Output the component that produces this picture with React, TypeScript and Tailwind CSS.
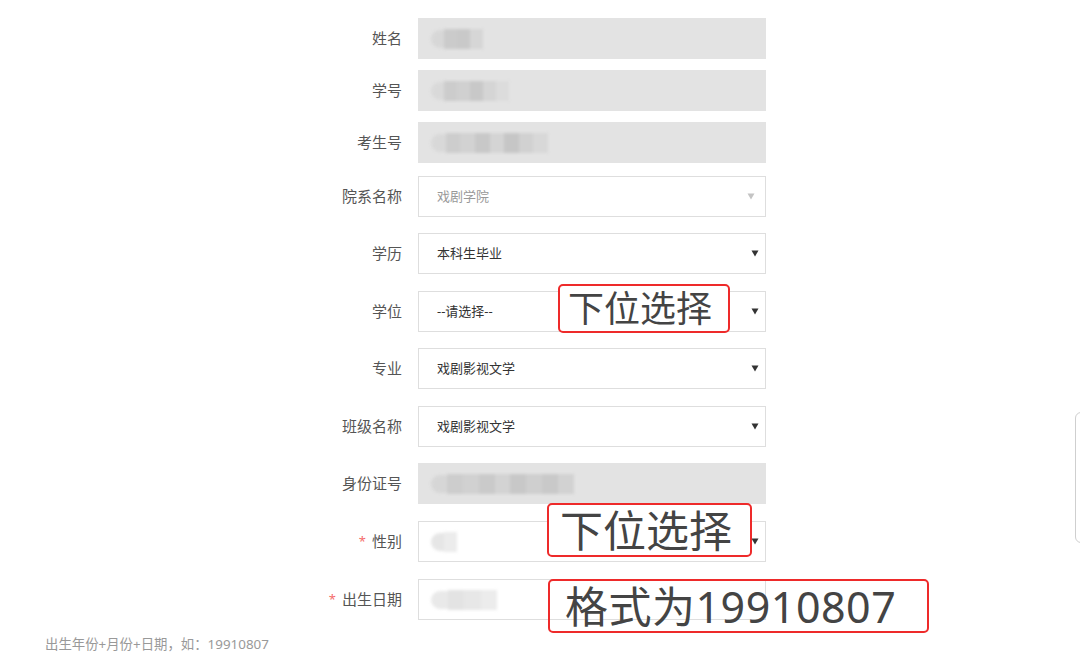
import React from "react";

const FONT = { fontFamily: '"Noto Sans", "Noto Sans CJK SC", sans-serif' };

function Blob({ w, shades }: { w: number; shades: string[] }) {
  return (
    <div className="flex items-center blur-[1.5px]" style={{ width: w }}>
      {shades.map((c, i) => (
        <div
          key={i}
          className={i === 0 ? "h-[18px] flex-1 rounded-l-full" : "h-[20px] flex-1"}
          style={{ backgroundColor: c }}
        />
      ))}
    </div>
  );
}

function Arrow({ gray }: { gray?: boolean }) {
  return (
    <svg width="8" height="7" viewBox="0 0 8 7" className="shrink-0">
      <path d="M0.5 0.5 L7.5 0.5 L4 6.5 Z" fill={gray ? "#c4c4c4" : "#333"} />
    </svg>
  );
}

type Row = {
  label: string;
  star?: boolean;
  mt: string;
  kind: "ro" | "sel" | "dis" | "inp";
  text?: string;
  blob?: { w: number; shades: string[] };
};

const rows: Row[] = [
  { label: "姓名", mt: "mt-[18px]", kind: "ro", blob: { w: 52, shades: ["#d7d7d7", "#cbcbcb", "#c9c9c9", "#d6d6d6"] } },
  { label: "学号", mt: "mt-[11px]", kind: "ro", blob: { w: 78, shades: ["#d9d9d9", "#cccccc", "#d0d0d0", "#c8c8c8", "#d5d5d5", "#dcdcdc"] } },
  { label: "考生号", mt: "mt-[11px]", kind: "ro", blob: { w: 117, shades: ["#d8d8d8", "#cdcdcd", "#d2d2d2", "#c8c8c8", "#d4d4d4", "#c6c6c6", "#d1d1d1", "#d8d8d8"] } },
  { label: "院系名称", mt: "mt-[13px]", kind: "dis", text: "戏剧学院" },
  { label: "学历", mt: "mt-[16px]", kind: "sel", text: "本科生毕业" },
  { label: "学位", mt: "mt-[17px]", kind: "sel", text: "--请选择--" },
  { label: "专业", mt: "mt-[16px]", kind: "sel", text: "戏剧影视文学" },
  { label: "班级名称", mt: "mt-[17px]", kind: "sel", text: "戏剧影视文学" },
  { label: "身份证号", mt: "mt-[16px]", kind: "ro", blob: { w: 143, shades: ["#d6d6d6", "#cdcdcd", "#d1d1d1", "#cacaca", "#d3d3d3", "#c8c8c8", "#cfcfcf", "#c9c9c9", "#d2d2d2"] } },
  { label: "性别", star: true, mt: "mt-[17px]", kind: "inp", blob: { w: 26, shades: ["#e6e6e6", "#ececec"] } },
  { label: "出生日期", star: true, mt: "mt-[17px]", kind: "inp", blob: { w: 66, shades: ["#e9e9e9", "#e3e3e3", "#e7e7e7", "#ececec"] } },
];

function Field({ r }: { r: Row }) {
  let box = "";
  if (r.kind === "ro") box = "bg-[#e3e3e3] border border-[#e3e3e3]";
  else box = "bg-white border border-[#dedede]";
  return (
    <div className={`flex items-center ${r.mt}`}>
      <div className="w-[402px] text-right text-[15px] text-[#555] leading-none">
        {r.star && <span className="text-[#f56c6c] text-[13px] mr-[6px] relative top-[-1px]">*</span>}
        {r.label}
      </div>
      <div className={`ml-4 w-[348px] h-[41px] flex items-center pl-[12px] pr-[6px] ${box}`}>
        {r.blob && <Blob w={r.blob.w} shades={r.blob.shades} />}
        {r.text && (
          <span className={`text-[13px] leading-none pl-[6px] ${r.kind === "dis" ? "text-[#999]" : "text-[#333]"}`}>
            {r.text}
          </span>
        )}
        <div className="flex-1" />
        {r.kind === "dis" && (
          <span className="mr-[4px] flex">
            <Arrow gray />
          </span>
        )}
        {r.kind === "sel" && <Arrow />}
        {r.kind === "inp" && r.label === "性别" && <Arrow />}
      </div>
    </div>
  );
}

export default function App() {
  return (
    <div className="relative w-[1080px] h-[663px] bg-white overflow-hidden" style={FONT}>
      <div className="flex flex-col">
        {rows.map((r) => (
          <Field key={r.label} r={r} />
        ))}
        <div className="mt-[15px] pl-[45px] text-[13.4px] leading-[18px] text-[#999]">
          出生年份+月份+日期，如：19910807
        </div>
      </div>

      {/* annotations */}
      <div className="absolute left-[558px] top-[284px] w-[172px] h-[49px] border-2 border-[#ee2a2a] rounded-[5px] bg-white flex items-center pl-[8px] text-[36px] leading-none text-[#444]">
        下位选择
      </div>
      <div className="absolute left-[547px] top-[503px] w-[205px] h-[54px] border-2 border-[#ee2a2a] rounded-[5px] bg-white flex items-center pl-[11px] text-[43px] leading-none text-[#444]">
        下位选择
      </div>
      <div className="absolute left-[548px] top-[579px] w-[381px] h-[54px] border-2 border-[#ee2a2a] rounded-[5px] flex items-center pl-[15px] text-[43px] tracking-[0.5px] leading-none text-[#444]">
        格式为19910807
      </div>

      {/* right edge scroll handle */}
      <div className="absolute left-[1075px] top-[412px] w-[20px] h-[131px] border border-[#cfcfcf] rounded-[6px] bg-white" />
    </div>
  );
}
